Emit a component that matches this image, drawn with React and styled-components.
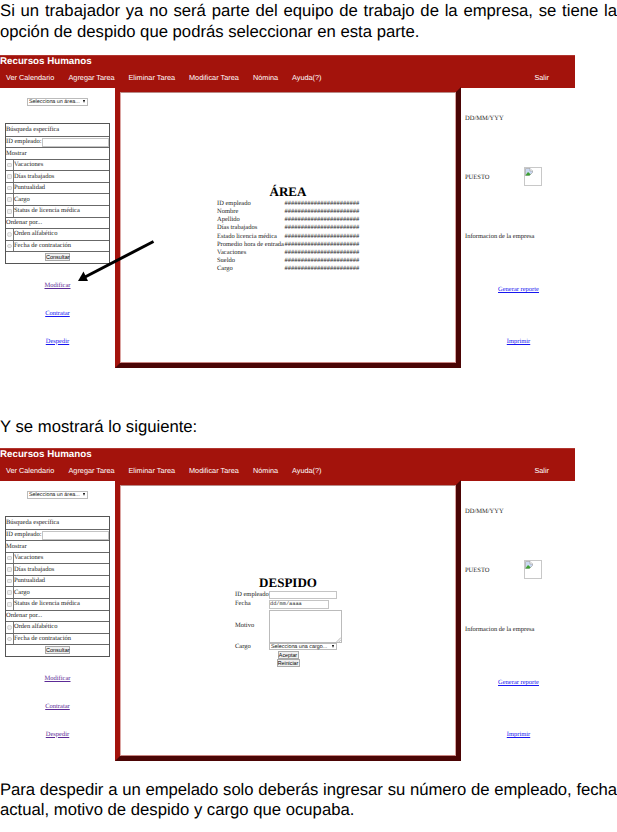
import React from "react";
import styled, { createGlobalStyle } from "styled-components";

const GlobalStyle = createGlobalStyle`
  * { box-sizing: border-box; }
  body { margin: 0; background: #fff; color: #000; overflow: hidden; text-rendering: geometricPrecision; }
`;

const sans = `"Liberation Sans", Arial, sans-serif`;
const serif = `"Liberation Serif", "Times New Roman", serif`;

const Page = styled.main`
  width: 617px;
  height: 832px;
  overflow: hidden;
  background: #fff;
`;

const Paragraph = styled.div`
  height: ${(p) => p.$height}px;
  padding-top: ${(p) => p.$top}px;
  font: 16.7px/${(p) => p.$leading || 21}px ${sans};
`;

const Line = styled.div`
  white-space: nowrap;
  letter-spacing: ${(p) => p.$spacing || 0}px;
  text-align: ${(p) => (p.$justify ? "justify" : "left")};
  text-align-last: ${(p) => (p.$justify ? "justify" : "left")};
`;

const Screen = styled.section`
  position: relative;
  width: 575px;
  height: 313px;
`;

const Header = styled.header`
  height: 33px;
  background: #a3130c;
  border-top: 1px solid #b0352f;
  color: #fff;
  font-family: ${sans};
`;

const Brand = styled.h1`
  margin: 0;
  height: 11px;
  font-size: 9.75px;
  line-height: 11px;
`;

const Nav = styled.nav`
  display: flex;
  gap: 14px;
  padding: 5px 26px 0 6px;
  font-size: 7.3px;
  line-height: 12px;
  white-space: nowrap;
`;

const NavItem = styled.span`
  width: ${(p) => p.$w}px;
  margin-left: ${(p) => (p.$end ? "auto" : "0")};
`;

const Body = styled.div`
  display: grid;
  grid-template-columns: 115px 346px 114px;
  height: 280px;
  font: 6.5px/8px ${serif};
  color: #1c1c1c;
  white-space: nowrap;
`;

const Side = styled.aside`
  display: flex;
  flex-direction: column;
  padding: 10px 5px 0;
`;

const Frame = styled.section`
  margin-top: -1px;
  height: 281px;
  border: 5px solid;
  border-color: #a3130c #4b0505 #4b0505 #a3130c;
`;

const FrameInner = styled.div`
  height: 100%;
  border: 1px solid;
  border-color: #b98b88 #dba5a2 #c98582 #dba5a2;
  padding-top: ${(p) => p.$top}px;
`;

const SelectBox = styled.div`
  display: flex;
  align-items: center;
  justify-content: space-between;
  width: ${(p) => p.$w}px;
  height: 7.5px;
  padding: 0 1px;
  border: 1px solid #bbb;
  font: 5.4px/6px ${sans};
  color: #111;
`;

const AreaSelect = styled(SelectBox)`
  margin: 0 0 17.7px 22px;
`;

const Triangle = styled.i`
  margin-right: 1px;
  border: solid transparent;
  border-width: 3px 1.5px 0;
  border-top-color: #000;
`;

const SearchTable = styled.div`
  display: grid;
  grid-auto-rows: 11.55px;
  width: 105px;
  border: 1px solid #555;
`;

const SearchRow = styled.div`
  display: flex;
  align-items: center;
  border-top: ${(p) => (p.$first ? 0 : 1)}px solid #686868;
  justify-content: ${(p) => (p.$center ? "center" : "flex-start")};
`;

const RadioCell = styled.div`
  display: flex;
  align-items: center;
  width: 8px;
  height: 100%;
  padding-left: 1px;
  border-right: 1px solid #777;
`;

const Radio = styled.i`
  width: 4.5px;
  height: 4.5px;
  border: 1px solid #d0d0d0;
  border-radius: ${(p) => (p.$round ? "50%" : "1px")};
  background: #eee;
`;

const Input = styled.div`
  width: ${(p) => p.$w}px;
  height: ${(p) => p.$h}px;
  border: 1px solid #c4c4c4;
  font: 5.3px/${(p) => p.$h - 2}px "Liberation Mono", monospace;
  color: #333;
`;

const Button = styled.button`
  display: block;
  width: ${(p) => p.$w}px;
  height: 8px;
  padding: 0;
  border: 1px solid #aaa;
  background: #f0f0f0;
  color: #000;
  font: ${(p) => p.$size || 5.3}px/6px ${sans};
`;

const Links = styled.div`
  display: flex;
  flex-direction: column;
  align-items: center;
  gap: 20px;
  margin-top: 18px;
`;

const Link = styled.a`
  color: ${(p) => (p.$visited ? "#5c2b96" : "#1717f0")};
  text-decoration: underline;
`;

const Info = styled.aside`
  display: grid;
  grid-template-rows: 62px 55px 64px 42px 62px;
  padding-left: 4px;
`;

const InfoRow = styled.div`
  display: flex;
  align-items: center;
  justify-content: ${(p) => (p.$center ? "center" : "flex-start")};
  padding-right: ${(p) => (p.$center ? 3 : 0)}px;
`;

const PhotoSlot = styled.div`
  width: 18px;
  height: 19px;
  margin: -2px 0 0 34.5px;
  border: 1px solid #c8c8c8;
`;

const Title = styled.h2`
  margin: 0;
  height: 15px;
  font-size: 13px;
  line-height: 15px;
  text-align: center;
  color: #000;
`;

const Details = styled.dl`
  display: grid;
  grid-template-columns: 67.5px 75px;
  grid-auto-rows: 8.13px;
  margin: 1.5px 0 0 96px;
`;

const Label = styled.dt``;

const Value = styled.dd`
  margin: 0;
`;

const Form = styled.div`
  display: grid;
  grid-template-columns: 34px 73px;
  grid-template-rows: 8.5px 10.5px 33px 8px;
  align-items: center;
  margin: 0.5px 0 0 114px;
`;

const FormButtons = styled.div`
  display: flex;
  flex-direction: column;
  align-items: center;
  gap: 0.6px;
  width: 334px;
`;

const TextArea = styled.div`
  display: flex;
  align-items: flex-end;
  justify-content: flex-end;
  width: 73px;
  height: 33px;
  border: 1px solid #bbb;
`;

const Arrow = styled.svg`
  position: absolute;
  left: 74px;
  top: 182px;
`;

const NAV = [
  ["Ver Calendario", 48.5],
  ["Agregar Tarea", 46],
  ["Eliminar Tarea", 46.5],
  ["Modificar Tarea", 50],
  ["Nómina", 25],
  ["Ayuda(?)", 30],
];

const SEARCH = [
  { text: "Búsqueda específica" },
  { text: "ID empleado:", input: true },
  { text: "Mostrar" },
  { text: "Vacaciones", box: true },
  { text: "Días trabajados", box: true },
  { text: "Puntualidad", box: true },
  { text: "Cargo", box: true },
  { text: "Status de licencia médica", box: true },
  { text: "Ordenar por..." },
  { text: "Orden alfabético", box: true, round: true },
  { text: "Fecha de contratación", box: true, round: true },
];

const FIELDS = [
  "ID empleado", "Nombre", "Apellido", "Días trabajados", "Estado licencia médica",
  "Promedio hora de entrada", "Vacaciones", "Sueldo", "Cargo",
];

const ImageIcon = styled.svg`
  display: block;
`;

function BrokenImage() {
  return (
    <PhotoSlot>
      <ImageIcon width="8" height="8" viewBox="0 0 8 8">
        <path d="M.5 .5H5L7.5 3V4.5L4.5 7.5H.5Z" fill="#cbd9f2" stroke="#a5a5a5" strokeWidth=".7" />
        <path d="M5 .5V3H7.5" fill="#fff" stroke="#999" strokeWidth=".6" />
        <path d="M.5 7.2L3 4L5.6 6.2L4.4 7.4H.5Z" fill="#3fa032" />
      </ImageIcon>
    </PhotoSlot>
  );
}

function AreaView() {
  return (
    <FrameInner $top={90.5}>
      <Title>ÁREA</Title>
      <Details>
        {FIELDS.map((field) => (
          <React.Fragment key={field}>
            <Label>{field}</Label>
            <Value>#######################</Value>
          </React.Fragment>
        ))}
      </Details>
    </FrameInner>
  );
}

function DismissalView() {
  return (
    <FrameInner $top={89}>
      <Title>DESPIDO</Title>
      <Form>
        <span>ID empleado</span>
        <Input $w={68} $h={8} />
        <span>Fecha</span>
        <Input $w={60} $h={9}>dd/mm/aaaa</Input>
        <span>Motivo</span>
        <TextArea>
          <svg width="5" height="5" viewBox="0 0 5 5">
            <path d="M.5 5L5 .5M2.7 5L5 2.7" stroke="#999" strokeWidth=".7" />
          </svg>
        </TextArea>
        <span>Cargo</span>
        <SelectBox $w={68}>Selecciona una cargo... <Triangle /></SelectBox>
      </Form>
      <FormButtons>
        <Button $w={21}>Aceptar</Button>
        <Button $w={23}>Reiniciar</Button>
      </FormButtons>
    </FrameInner>
  );
}

function AppScreen({ children, visitedAll, arrow }) {
  return (
    <Screen>
      <Header>
        <Brand>Recursos Humanos</Brand>
        <Nav>
          {NAV.map(([label, w]) => <NavItem key={label} $w={w}>{label}</NavItem>)}
          <NavItem $end>Salir</NavItem>
        </Nav>
      </Header>
      <Body>
        <Side>
          <AreaSelect $w={61}>Selecciona un área... <Triangle /></AreaSelect>
          <SearchTable>
            {SEARCH.map((row, i) => (
              <SearchRow key={row.text} $first={i === 0}>
                {row.box && <RadioCell><Radio $round={row.round} /></RadioCell>}
                <span>{row.text}</span>
                {row.input && <Input $w={67} $h={9} />}
              </SearchRow>
            ))}
            <SearchRow $center><Button $w={25} $size={5.5}>Consultar</Button></SearchRow>
          </SearchTable>
          <Links>
            <Link $visited>Modificar</Link>
            <Link $visited={visitedAll}>Contratar</Link>
            <Link $visited={visitedAll}>Despedir</Link>
          </Links>
        </Side>
        <Frame>{children}</Frame>
        <Info>
          <InfoRow>DD/MM/YYY</InfoRow>
          <InfoRow>PUESTO<BrokenImage /></InfoRow>
          <InfoRow>Informacion de la empresa</InfoRow>
          <InfoRow $center><Link>Generar reporte</Link></InfoRow>
          <InfoRow $center><Link>Imprimir</Link></InfoRow>
        </Info>
      </Body>
      {arrow && (
        <Arrow width="84" height="48" viewBox="0 0 84 48">
          <path d="M79.5 4.5L11 40" stroke="#000" strokeWidth="3" />
          <path d="M4 44L9.5 34.5L14 44Z" fill="#000" />
        </Arrow>
      )}
    </Screen>
  );
}

export default function App() {
  return (
    <Page>
      <GlobalStyle />
      <Paragraph $height={55} $top={0}>
        <Line $justify>Si un trabajador ya no será parte del equipo de trabajo de la empresa, se tiene la</Line>
        <Line>opción de despido que podrás seleccionar en esta parte.</Line>
      </Paragraph>
      <AppScreen arrow><AreaView /></AppScreen>
      <Paragraph $height={80} $top={48}>
        <Line>Y se mostrará lo siguiente:</Line>
      </Paragraph>
      <AppScreen visitedAll><DismissalView /></AppScreen>
      <Paragraph $height={71} $top={19} $leading={20}>
        <Line $justify $spacing={-0.06}>Para despedir a un empelado solo deberás ingresar su número de empleado, fecha</Line>
        <Line>actual, motivo de despido y cargo que ocupaba.</Line>
      </Paragraph>
    </Page>
  );
}
